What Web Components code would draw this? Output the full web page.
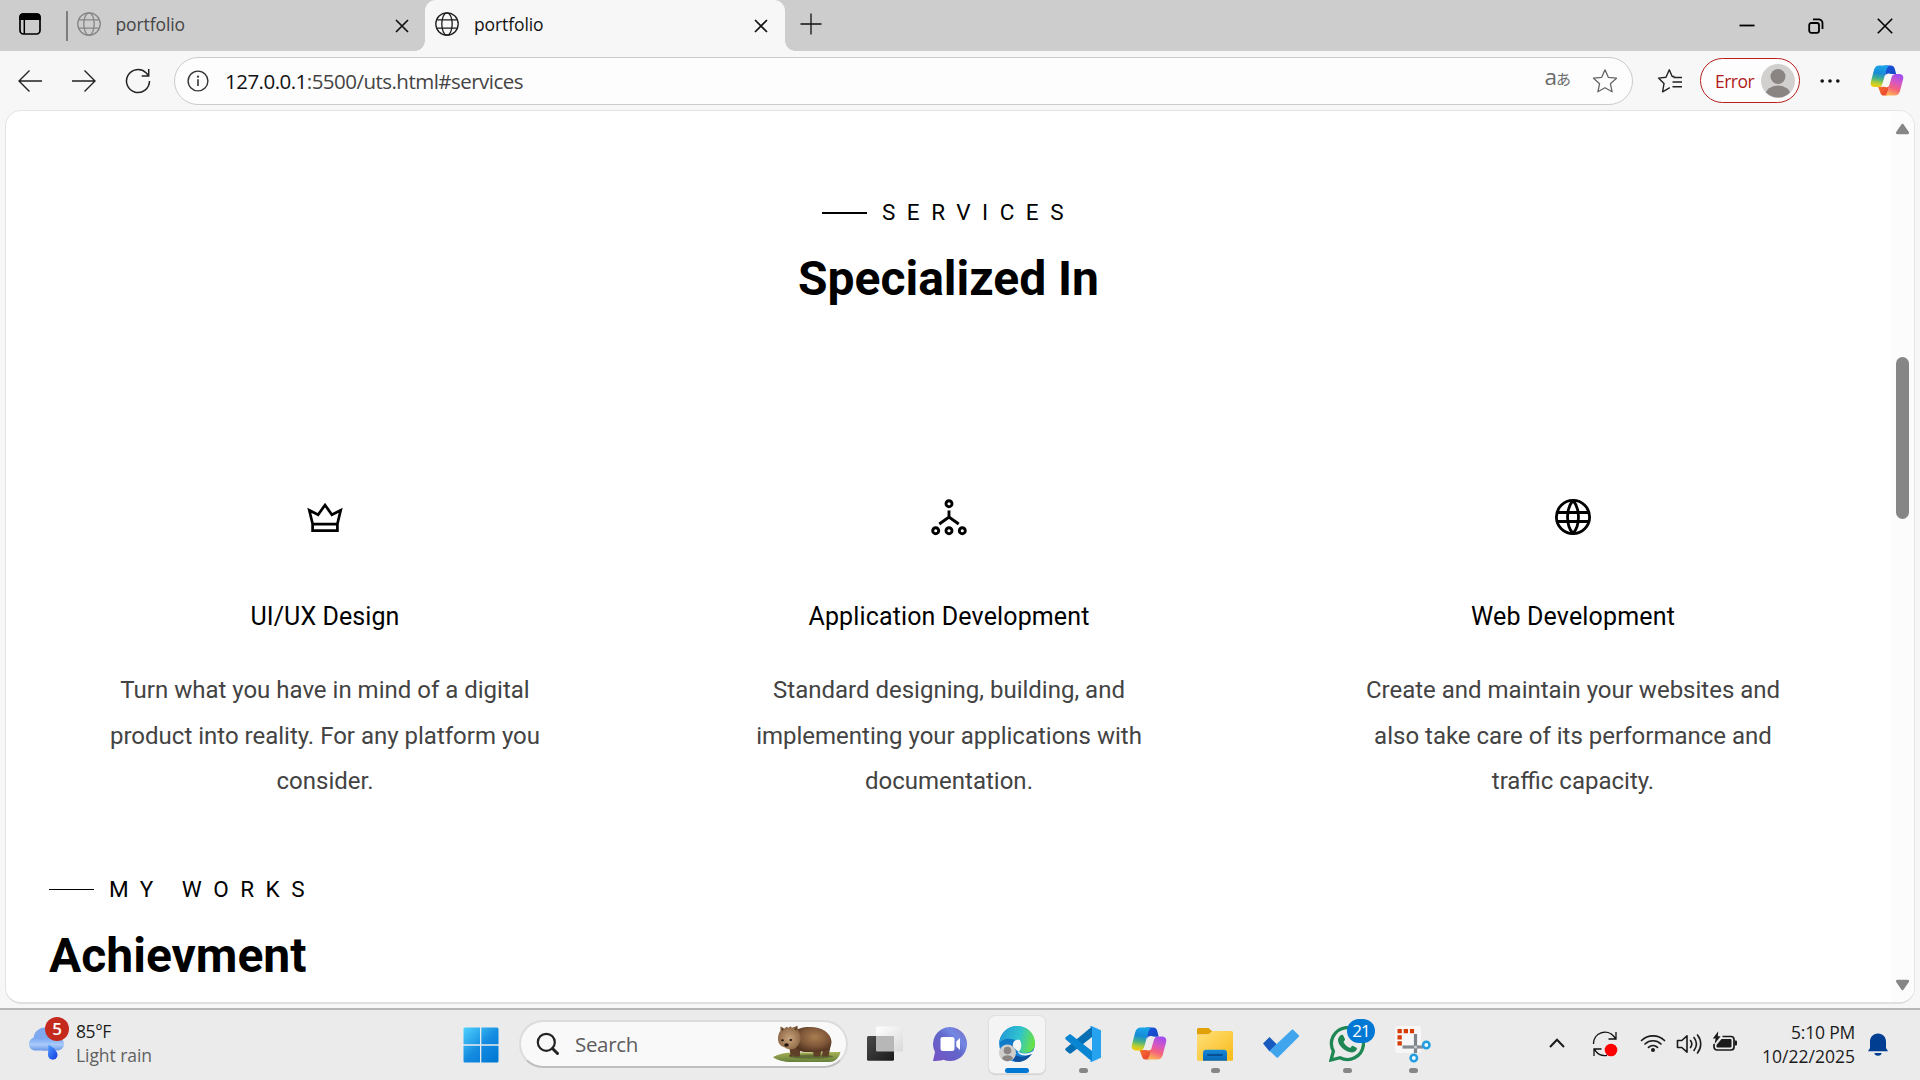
<!DOCTYPE html>
<html lang="en">
<head>
<meta charset="utf-8">
<title>portfolio</title>
<style>
html,body{margin:0;padding:0;overflow:hidden}
body{width:1920px;height:1080px;background:#f7f7f7;color:#000;font-family:"Open Sans","Noto Sans",sans-serif}
</style>
</head>
<body>
<desktop-screen></desktop-screen>
<script>
const ICONS = {
workspaces:['0 0 24 24',`<rect x="2" y="2.2" width="20" height="19.8" rx="3.5" fill="none" stroke="#000" stroke-width="1.7"/><path d="M1.2 8V5a3.8 3.8 0 0 1 3.8-3.8h14A3.8 3.8 0 0 1 22.800 5v3z"/><path d="M6.300 7v15" stroke="#000" stroke-width="1.500"/>`],
globe:['0 0 24 24',`<g fill="none" stroke="currentColor" stroke-width="1.3"><circle cx="12" cy="12" r="11.2"/><ellipse cx="12" cy="12" rx="5.200" ry="11.200"/><path d="M2 7.800h20M2 16.200h20"/></g>`],
cross:['0 0 14 14',`<path d="M1 1l12 12M13 1L1 13" fill="none" stroke="#111" stroke-width="1.700"/>`],
plus:['0 0 22 22',`<path d="M11 .5v21M.5 11h21" fill="none" stroke="#111" stroke-width="1.300"/>`],
min:['0 0 16 16',`<path d="M.5 7.500h15" stroke="#000" stroke-width="1.800"/>`],
restore:['0 0 16 16',`<g fill="none" stroke="#000" stroke-width="1.800"><rect x="1.200" y="5" width="9.800" height="9.800" rx="2"/><path d="M5 1.300h5.500a4 4 0 0 1 4 4V11"/></g>`],
close:['0 0 16 16',`<path d="M.8.800l14.400 14.400M15.200.800L.8 15.200" stroke="#000" stroke-width="1.600"/>`],
back:['0 0 24 24',`<path d="M24 12H1M11.500 1.500L1 12l10.500 10.500" fill="none" stroke="#222" stroke-width="1.400"/>`],
forward:['0 0 24 24',`<path d="M0 12h23M12.500 1.500L23 12 12.500 22.500" fill="none" stroke="#222" stroke-width="1.400"/>`],
reload:['0 0 26 26',`<path d="M24.500 13A11.500 11.500 0 1 1 21 4.800l2.700 3M23.700 1v7h-7" fill="none" stroke="#222" stroke-width="1.500"/>`],
info:['0 0 22 22',`<circle cx="11" cy="11" r="9.900" fill="none" stroke="#333" stroke-width="1.400"/><path d="M11 9.300V16" stroke="#333" stroke-width="1.600"/><circle cx="11" cy="6.700" r="1.100" fill="#333"/>`],
star:['0 0 26 26',`<path d="M13 1.800l3.300 7.500 8.200.9-6.100 5.500 1.700 8.100L13 19.700l-7.100 4.100 1.700-8.100-6.100-5.500 8.200-.9z" fill="none" stroke="#666" stroke-width="1.300" stroke-linejoin="round"/>`],
favorites:['0 0 26 26',`<g fill="none" stroke="#222" stroke-width="1.400" stroke-linejoin="round"><path d="M17.500 8.500h-2.300L12.300 1.800 9 9.300l-7.500.8 5.500 5.500-1.400 8.200 7.200-4.100"/><path d="M16.500 9.500H25M15.500 14H25M15.500 18.800H25"/></g>`],
avatar:['0 0 34 34',`<defs><clipPath id="a"><circle cx="17" cy="17" r="16.500"/></clipPath></defs><circle cx="17" cy="17" r="17" fill="#d2d0ce"/><g clip-path="url(#a)" fill="#8a8583"><circle cx="17" cy="12.500" r="7.500"/><ellipse cx="17" cy="31" rx="12.500" ry="9.500"/></g>`],
dots:['0 0 20 6',`<g fill="#111"><circle cx="2.200" cy="3" r="1.800"/><circle cx="10" cy="3" r="1.800"/><circle cx="17.800" cy="3" r="1.800"/></g>`],
copilot:['0 0 36 34',`<defs><linearGradient id="c1" x1=".45" y1="0" x2=".3" y2="1"><stop offset="0" stop-color="#1aa5e8"/><stop offset=".35" stop-color="#168bd8"/><stop offset=".6" stop-color="#45b08a"/><stop offset=".82" stop-color="#b8ce30"/><stop offset="1" stop-color="#f6cb10"/></linearGradient><linearGradient id="c2" x1=".7" y1="0" x2=".4" y2="1"><stop offset="0" stop-color="#9f4df2"/><stop offset=".38" stop-color="#d457c4"/><stop offset=".68" stop-color="#f5627c"/><stop offset="1" stop-color="#ffb057"/></linearGradient><linearGradient id="c3" x1="0" y1="0" x2="1" y2="1"><stop offset="0" stop-color="#1b53dd"/><stop offset="1" stop-color="#1448c0"/></linearGradient><linearGradient id="c4" x1="0" y1="0" x2="1" y2="1"><stop offset="0" stop-color="#f9752a"/><stop offset="1" stop-color="#e73b35"/></linearGradient></defs>
<path d="M15 1h7c2.500 0 3.800 1.500 4.400 4l1.300 5.200H24c-2.500 0-3.500-.6-4.500-.6-1.500 0-2.500.8-3 2.400z" fill="url(#c3)"/><path d="M8.500 23.500h4.500c3 0 3.500.6 5 .6 1.200 0 2-.7 2.500-2L18 33h-3.500c-2 0-3-1.200-3.500-3z" fill="url(#c4)"/>
<path d="M20.500 1C18.500 2 17.800 4 17 7l-3.700 13c-.8 2.800-2 4-4.300 4H5.500C1.500 24 0 21.500 1 18L4.300 5.500C5.200 2.500 6.800 1 10 1z" fill="url(#c1)"/><path d="M15.500 33c2-1 2.700-3 3.500-6l3.700-13c.8-2.800 2-4 4.300-4h3.500c4 0 5.500 2.500 4.500 6l-3.300 12.500c-.9 3-2.500 4.500-5.700 4.500z" fill="url(#c2)"/>`],
up:['0 0 16 12',`<path d="M8 2l5.500 8h-11z" fill="#868686" stroke="#868686" stroke-width="3" stroke-linejoin="round"/>`],
down:['0 0 16 12',`<path d="M8 10L2.500 2h11z" fill="#868686" stroke="#868686" stroke-width="3" stroke-linejoin="round"/>`],
crown:['0 0 40 40',`<path d="M4.300 13.200L7.700 27.200h24.600l3.400-14-8.800 4.500L20 8l-6.900 9.700zM7.600 27v6.600h24.800V27" fill="none" stroke="#000" stroke-width="2.700"/>`],
sitemap:['0 0 40 40',`<g fill="none" stroke="#000" stroke-width="2.900"><circle cx="20" cy="6.700" r="3"/><circle cx="6.700" cy="33.700" r="3"/><circle cx="20" cy="33.700" r="3"/><circle cx="33.300" cy="33.700" r="3"/><path d="M20 13.500v7M10.300 27L20 20l9.700 7"/></g>`],
world:['0 0 40 40',`<g fill="none" stroke="#000" stroke-width="2.800"><circle cx="20" cy="20" r="16.600"/><path d="M20 3.500c-7.300 8-7.300 25 0 33M20 3.500c7.300 8 7.300 25 0 33"/><path d="M4 15.500h32M4 24.500h32"/></g>`],
weather:['0 0 38 46',`<defs><linearGradient id="w1" x1="0" y1="0" x2="0" y2="1"><stop offset="0" stop-color="#6b9cf0"/><stop offset=".6" stop-color="#a9cbfa"/><stop offset="1" stop-color="#6c98e8"/></linearGradient><linearGradient id="w2" x1="0" y1="0" x2="1" y2="1"><stop offset="0" stop-color="#4fa0ff"/><stop offset="1" stop-color="#1238e0"/></linearGradient></defs><circle cx="17" cy="22" r="11.500" fill="#7fa9ef"/><path d="M7.500 20.500c3 0 5 1 6.500 3 2-3 5-4.500 8-4 3-1 6-1 9 1 3 1 5 3 5 6.500 0 4-3 6.500-7 6.500H8c-4.500 0-7-2.500-7-6.500s3-6.500 6.500-6.500z" fill="url(#w1)"/><path d="M20.500 27.500c5 3 9 7 9 10.500a4.700 4.700 0 0 1-9.500 0z" fill="url(#w2)"/>`],
start:['0 0 36 36',`<defs><linearGradient id="s" gradientUnits="userSpaceOnUse" x1="0" y1="0" x2="32" y2="36"><stop offset="0" stop-color="#4fd3ff"/><stop offset=".55" stop-color="#148be0"/><stop offset="1" stop-color="#0078d4"/></linearGradient></defs><path d="M2 .5h15v16.700H.5V2A1.500 1.500 0 0 1 2 .5zM18.300.5H34A1.500 1.500 0 0 1 35.500 2v15.200H18.300zM.5 18.700H17v16.800H2A1.500 1.500 0 0 1 .5 34zM18.300 18.700h17.200V34a1.500 1.500 0 0 1-1.500 1.500H18.300z" fill="url(#s)"/>`],
search:['0 0 24 24',`<g fill="none" stroke="#222"><circle cx="10.300" cy="10.300" r="8.500" stroke-width="2.200"/><path d="M16.500 16.500l5 5" stroke-width="3" stroke-linecap="round"/></g>`],
wombat:['0 0 70 40',`<defs><radialGradient id="b1" cx=".55" cy=".4" r=".6"><stop offset="0" stop-color="#a87e50"/><stop offset=".6" stop-color="#80583a"/><stop offset="1" stop-color="#553420"/></radialGradient><radialGradient id="b2" cx=".5" cy=".55" r=".6"><stop offset="0" stop-color="#c8a47e"/><stop offset=".7" stop-color="#9a7450"/><stop offset="1" stop-color="#7a5638"/></radialGradient><linearGradient id="b3" x1="0" y1="0" x2="0" y2="1"><stop offset="0" stop-color="#a9b056"/><stop offset="1" stop-color="#65803a"/></linearGradient></defs>
<path d="M1 32c7-4 15-5 25-4.500L68.500 27c-1 5-5 10-11 10H19C12 37 5 35.500 1 32z" fill="url(#b3)"/><ellipse cx="39" cy="31.500" rx="22" ry="2" fill="#45502a" opacity=".6"/><path d="M17 21l11 2v8.500h-6.500V29l-1 2.500h-3c-1-1 0-2 1-2zM41 22l9 1-2 8.500h-6.500zM51 21l8-2-2.500 12.500H50z" fill="#5f3f28"/><path d="M24 5c5-2.500 9-3 14-3 12 0 21 6 21.500 14.500 0 6-4 9-9.500 10-6 1-11 .5-15 .5-6 0-11-2-13-6z" fill="url(#b1)"/><path d="M8.500 1.500l4 2 2-1.800 2 1 2-1.500 1.500 1.500 5.500-2 .5 4.500c3 4 3.500 9 1 13.500-2 4-5 6-9 5.500-2.500 0-4-1-5.500-2-4-1-6.500-4-6.500-8.500 0-3.500 1-6 2.500-8z" fill="url(#b2)"/><path d="M9.500 2.800l2 2-1.500 1.200zM24.500 2l-2 2.500 2 1z" fill="#4f3321"/><ellipse cx="14.500" cy="20" rx="2.300" ry="1.700" fill="#241712"/><ellipse cx="10.500" cy="15.300" rx="1.400" ry="1" fill="#1e120d"/><ellipse cx="18.800" cy="15" rx="1.400" ry="1" fill="#1e120d"/>`],
taskview:['0 0 36 36',`<defs><linearGradient id="t" x1="0" y1="0" x2="1" y2="1"><stop offset="0" stop-color="#4a4a4a"/><stop offset="1" stop-color="#1a1a1a"/></linearGradient><linearGradient id="t2" x1="0" y1="0" x2="1" y2="1"><stop offset="0" stop-color="#fff"/><stop offset="1" stop-color="#d9d9d9"/></linearGradient></defs><rect x="9" y=".5" width="27" height="25" rx="1.500" fill="url(#t2)"/><rect x="0" y="10" width="27" height="24.700" rx="1.500" fill="url(#t)"/><path d="M9 10h18v15.500H10A1 1 0 0 1 9 24.500z" fill="#b7b7b7"/>`],
chat:['1 0 36 36',`<defs><linearGradient id="h" x1="1" y1="0" x2="0" y2="1"><stop offset="0" stop-color="#7d6ac4"/><stop offset=".3" stop-color="#7287e3"/><stop offset=".5" stop-color="#6167ca"/><stop offset="1" stop-color="#7651c4"/></linearGradient></defs><path d="M18 1a17 17 0 1 1-6.500 32.700C8 34.800 4 35 1 35L3 26A17 17 0 0 1 18 1z" fill="url(#h)"/><rect x="8.500" y="11" width="14" height="14" rx="2.200" fill="#fff"/><path d="M24.300 15.500L28 12v12l-3.700-3.500z" fill="#fff"/>`],
edge:['0 0 36 36',`<defs><linearGradient id="e1" x1="0" y1=".3" x2="1" y2=".5"><stop offset="0" stop-color="#2399d8"/><stop offset=".55" stop-color="#2fc3ce"/><stop offset="1" stop-color="#69e342"/></linearGradient><linearGradient id="e2" x1="0" y1="0" x2="0" y2="1"><stop offset="0" stop-color="#0c6db5"/><stop offset="1" stop-color="#168be0"/></linearGradient></defs><circle cx="18" cy="18" r="17.800" fill="url(#e2)"/><path d="M0 18C1 7 8.500 0 18 0c10 0 18 7 18 17 0 6-4 10-10 10-4 0-7-1-6-3 2-2 2-6-1-8C14 12 4 11 0 18z" fill="url(#e1)"/><path d="M13 18c-1 9 5 15 14 12 3-1 5-3 6.500-3C29 34 23 37 15.500 35.500 10 31 10 22 13 18z" fill="#0d519f"/><path d="M20.800 14c-2.500-.5-6 0-6.500 3.500-.3 4.500 5 10 11 10 5 0 8-1.500 11-4l-2 4c-1 .5-2 .5-3 1-5 2-10 1-12.500-2 3-2 5-7 2-12.500z" fill="#f4f4f4"/><circle cx="18" cy="19" r="4.200" fill="#f4f4f4"/><circle cx="8.500" cy="27" r="8.500" fill="#cfcdcb"/><circle cx="8.500" cy="24.500" r="3.800" fill="#8a8583"/><path d="M3 32.500c1-4.500 10-4.500 11 0-3 3.700-8 3.700-11 0z" fill="#8a8583"/>`],
vscode:['0 0 36 36',`<path d="M1 24.700L4 27.200c.8.600 1.500.6 2.200 0L27 11V.500L.8 22.300c-.8.800-.8 1.600.2 2.400z" fill="#066fb3"/><path d="M1 11l3-2.300c.8-.5 1.500-.4 2.200.1L27 25v10.500L.8 13.500C0 12.700 0 11.800 1 11z" fill="#0a85d2"/><path d="M26.500 0L36 4.300v27.400L26.500 36c-1 0-1.500-.3-2-1 1.500.8 2.500 0 2.500-2V3c0-2-1-2.800-2.500-2 .5-.7 1-1 2-1z" fill="#27a2ee"/>`],
folder:['0 0 36 36',`<defs><linearGradient id="f" x1="0" y1="0" x2="1" y2="1"><stop offset="0" stop-color="#ffe07a"/><stop offset="1" stop-color="#f9bb18"/></linearGradient><linearGradient id="f2" x1="0" y1="0" x2="0" y2="1"><stop offset="0" stop-color="#1689d8"/><stop offset="1" stop-color="#0668b8"/></linearGradient></defs><path d="M0 3.500A1.500 1.500 0 0 1 1.500 2h10l3.500 3v3.500H0z" fill="#dfa008"/><path d="M0 8.500h11l4.500-3.500H34.500A1.500 1.500 0 0 1 36 6.500V34a.8.800 0 0 1-.8.800H.8A.8.800 0 0 1 0 34z" fill="url(#f)"/><path d="M6 34.700V27a3.200 3.200 0 0 1 3.200-3.200h17.600A3.200 3.200 0 0 1 30 27v7.700z" fill="url(#f2)"/><path d="M11 29h14" stroke="#074f90" stroke-width="1.800" stroke-linecap="round"/>`],
todo:['0 0 36 36',`<path d="M0 17.500L6.500 11l7.500 7.500-7.500 7z" fill="#185abd"/><path d="M28.800 3.700c.4-.4 1-.4 1.400 0l5.600 5.600c.4.400.4 1 0 1.400L15 31.500c-.4.400-1 .4-1.400 0L6.500 24.800z" fill="#41a5ee"/>`],
whatsapp:['0 0 36 36',`<path d="M2 34l2.400-8.800A16 16 0 1 1 11 31.700z" fill="none" stroke="#1f8754" stroke-width="3.300"/><path d="M12 9c1-.5 1.800-.5 2.300.5l1.700 3.800c.3.700-1 2-1.500 2.700 1.500 3 3.700 5 6.800 6 .8-1 1.700-2.500 2.500-2.200l3.700 2c.6.300.5 1.200 0 2.200-1.400 2.300-4.500 3-7.200 2C14.500 24 10.800 20.500 9.300 16c-1-3 .5-5.500 2.700-7z" fill="#1f8754"/>`],
snip:['0 0 38 38',`<rect x="1" y="0" width="26" height="27" rx="3" fill="#f7f7f7"/><path d="M3.500 3h4.300v4.300H3.500zM9.700 3h4.300v4.300H9.700zM15.900 3h4.200v4.300h-4.200zM3.500 9.200h4.300v4.300H3.500zM3.500 15.300h4.300v4.200H3.500z" fill="#d83b01"/><path d="M21.500 8v19" stroke="#7d848b" stroke-width="3.200"/><path d="M8.500 21H29" stroke="#858c94" stroke-width="3.200"/><circle cx="21.500" cy="21" r="1.600" fill="#c8ccd0"/><g fill="#f5fbff" stroke="#209edf" stroke-width="2.500"><circle cx="32.300" cy="19" r="3.200"/><circle cx="19.800" cy="32" r="3.200"/></g>`],
chevron:['0 0 18 12',`<path d="M2 10l7-7.200 7 7.200" fill="none" stroke="#1b1b1b" stroke-width="2"/>`],
sync:['0 0 26 26',`<g fill="none" stroke="#111" stroke-width="1.300"><path d="M1.500 13A11.500 11.500 0 0 1 22 5.500l1.700 2.300M24 1v7h-7.500M15 24.300A11.500 11.500 0 0 1 4 20.500l-1.700-2.300M2 25v-7h7.500"/></g><circle cx="19" cy="19" r="6.300" fill="#f00"/>`],
wifi:['0 0 26 20',`<g fill="none" stroke="#1b1b1b" stroke-width="1.700" stroke-linecap="round"><path d="M1.500 7.500a16.500 16.500 0 0 1 23 0M5 11a11.500 11.500 0 0 1 16 0M8.500 14.300a6.500 6.500 0 0 1 9 0"/></g><circle cx="13" cy="17" r="2" fill="#1b1b1b"/>`],
speaker:['0 0 26 22',`<g fill="none" stroke="#1b1b1b" stroke-width="1.600" stroke-linecap="round" stroke-linejoin="round"><path d="M1.500 7.500h4.300L11 2.800v16.400l-5.200-4.700H1.500z"/><path d="M14.500 7.500c1.500 2 1.500 5 0 7M18 4.500c3 4 3 9 0 13M21.500 2c4.300 5.500 4.300 12.500 0 18"/></g>`],
battery:['0 0 26 22',`<path d="M10.500 5.500H19a3 3 0 0 1 3 3V16a3 3 0 0 1-3 3H5a3 3 0 0 1-3-3v-3" fill="none" stroke="#1b1b1b" stroke-width="1.700"/><path d="M9.500 8H18.500a1 1 0 0 1 1 1v6.500a1 1 0 0 1-1 1h-13a1 1 0 0 1-1-1V14z" fill="#1b1b1b"/><path d="M22.500 9.500h1.500a1 1 0 0 1 1 1v3a1 1 0 0 1-1 1h-1.500z" fill="#1b1b1b"/><path d="M6.300.3L.8 7.500h2.800l-1 5.500L8.600 5.300H5.800z" fill="#1b1b1b"/>`],
bell:['0 0 22 26',`<path d="M11 1.500c5 0 8 3.700 8 8V16l2 3.300H1L3 16V9.500c0-4.300 3-8 8-8zM7.500 21h7a3.500 2.800 0 0 1-7 0z" fill="#003e92"/>`]
};
const define = (name, html, setup) => {
  const t = document.createElement('template');
  t.innerHTML = html;
  customElements.define(name, class extends HTMLElement {
    connectedCallback() {
      if (this.shadowRoot) return;
      this.attachShadow({mode: 'open'}).append(t.content.cloneNode(true));
      if (setup) setup(this, this.shadowRoot);
    }
  });
};

/* ui-icon: name, w, h */
define('ui-icon', `<style>:host{display:block;flex:none;line-height:0}svg{display:block}</style>`, (el, root) => {
  const [vb, body] = ICONS[el.getAttribute('name')];
  const [, , vw, vh] = vb.split(' ');
  const w = el.getAttribute('w') || vw, h = el.getAttribute('h') || vh;
  const box = document.createElement('div');
  box.innerHTML = `<svg width="${w}" height="${h}" viewBox="${vb}">${body}</svg>`;
  root.append(box.firstChild);
});

/* text-run: one line of text, tracked to the measure given in "w" */
define('text-run', `<style>:host{display:block;flex:none;white-space:nowrap;width:max-content}</style><slot></slot>`, el => {
  const target = parseFloat(el.getAttribute('w'));
  if (!target) return;
  const n = [...el.textContent].length;
  const natural = el.getBoundingClientRect().width;
  el.style.letterSpacing = ((target - natural) / n).toFixed(3) + 'px';
});

define('browser-tab', `<style>
:host{display:flex;flex:none;align-items:center;box-sizing:border-box;height:51px;font-size:17.500px;line-height:24px;color:#454545;position:relative}
ui-icon.g{color:#858585}
:host([active]){background:#f7f7f7;border-radius:11px 11px 0 0;color:#111}
:host([active]) .g{color:#1d1d1d}
:host([active])::before,:host([active])::after{content:"";position:absolute;bottom:0;width:10px;height:10px}
:host([active])::before{left:-10px;background:radial-gradient(circle at 0 0,transparent 9.500px,#f7f7f7 10px)}
:host([active])::after{right:-10px;background:radial-gradient(circle at 100% 0,transparent 9.500px,#f7f7f7 10px)}
.t{margin:-4px 0 0 15px}.x{margin-left:auto;margin-right:16px}.g{margin-left:9px;margin-top:-3px}
:host([active]) .g{margin-left:10px}:host([active]) .x{margin-right:17px}
</style><ui-icon class="g" name="globe"></ui-icon><text-run class="t" w="69.5">portfolio</text-run><ui-icon class="x" name="cross"></ui-icon>`);

define('tab-strip', `<style>
:host{display:flex;height:51px;flex:none;background:#cdcdcd;align-items:center}
.div{width:1.500px;height:30px;background:#7e7e7e;margin-left:24px;margin-top:1px}
.win{display:flex;margin-left:auto;gap:53px;margin-right:27px;align-items:center}
</style>
<ui-icon name="workspaces" style="margin-left:18px;margin-top:-3px"></ui-icon><div class="div"></div>
<browser-tab style="width:357.500px;margin-left:0"></browser-tab>
<browser-tab active style="width:360px"></browser-tab>
<ui-icon name="plus" style="margin-left:15px;margin-top:-4px"></ui-icon>
<div class="win"><ui-icon name="min"></ui-icon><ui-icon name="restore"></ui-icon><ui-icon name="close"></ui-icon></div>`);

define('address-bar', `<style>
:host{display:flex;flex:none;box-sizing:border-box;width:1459px;height:48px;border:1.500px solid #cbcbcb;border-radius:24px;background:#fdfdfd;align-items:center;padding-left:12px;font-size:20.500px;line-height:28px}
span{color:#111}.u{color:#444;margin-left:16px;margin-top:1px}
.tr{margin-left:auto;margin-top:-5px;color:#6b6b6b;font:22.500px/28px "Open Sans","Noto Sans CJK JP",sans-serif;letter-spacing:-1px;display:flex;align-items:baseline}
.tr span{font:15px/28px "Noto Sans CJK JP",sans-serif;color:#6b6b6b;letter-spacing:0}
</style><ui-icon name="info"></ui-icon><text-run class="u" w="298"><span>127.0.0.1</span>:5500/uts.html#services</text-run>
<div class="tr">a<span>あ</span></div><ui-icon name="star" style="margin-left:21px;margin-right:14px"></ui-icon>`);

define('tool-bar', `<style>
:host{display:flex;flex:none;height:59px;align-items:center;background:#f7f7f7}
.err{display:flex;align-items:center;justify-content:space-between;box-sizing:border-box;width:100px;height:45px;border:1.500px solid #b91e1e;border-radius:23px;color:#b11a1a;padding:0 4px 0 14px;font-size:17.500px;background:#fdfdfd;margin-left:17px}
</style>
<ui-icon name="back" style="margin-left:18px"></ui-icon><ui-icon name="forward" style="margin-left:30px"></ui-icon><ui-icon name="reload" style="margin-left:29px"></ui-icon>
<address-bar style="margin-left:23px"></address-bar>
<ui-icon name="favorites" style="margin-left:24px"></ui-icon>
<div class="err"><text-run w="39">Error</text-run><ui-icon name="avatar"></ui-icon></div>
<ui-icon name="dots" style="margin-left:20px"></ui-icon><ui-icon name="copilot" w="34" h="33" style="margin-left:30px"></ui-icon>`);

define('section-heading', `<style>
:host{display:flex;flex-direction:column;font-family:Roboto,sans-serif;color:#000}
.k{display:flex;align-items:center;height:30px;font-size:22.500px;line-height:30px}
.k i{width:45px;height:var(--rule,2px);background:#000;margin:1px 15px 0 0}
.h{font-weight:700;font-size:48px;line-height:60px;margin-top:22px}
</style><div class="k"><i></i><slot name="kicker"></slot></div><div class="h"><slot></slot></div>`);

define('service-card', `<style>
:host{display:flex;flex-direction:column;align-items:center;font-family:Roboto,sans-serif;width:624px;flex:none}
.t{font-size:25px;line-height:32px;margin-top:64px;color:#000}
.b{display:flex;flex-direction:column;align-items:center;margin-top:35px;font-size:24px;line-height:45.500px;color:#434343}
</style><slot name="icon"></slot><div class="t"><slot name="title"></slot></div><div class="b"><slot></slot></div>`);

define('page-scrollbar', `<style>
:host{display:flex;flex-direction:column;align-items:center;width:23px;flex:none;background:#fcfcfc;box-sizing:border-box;padding:12px 0 11px}
div{width:13px;height:162px;border-radius:6.500px;background:#868686;margin:222px 0 auto}
</style><ui-icon name="up" w="15"></ui-icon><div></div><ui-icon name="down" w="15"></ui-icon>`);

define('page-view', `<style>
:host{display:flex;flex:none;box-sizing:border-box;margin:0 5px;width:1910px;height:894px;border:1px solid #e4e4e4;border-bottom:2px solid #e0e0e0;border-radius:16px;background:#fff;overflow:hidden}
main{display:flex;flex-direction:column;width:1885px;box-sizing:border-box;padding-top:86px}
.c{align-self:center;align-items:center}
.row{display:flex;width:1872px;margin:188px 0 0 7px}
</style><main>
<section-heading class="c"><text-run slot="kicker" w="193">SERVICES</text-run><text-run w="301">Specialized In</text-run></section-heading>
<div class="row">
<service-card><ui-icon slot="icon" name="crown"></ui-icon><text-run slot="title" w="149">UI/UX Design</text-run><text-run>Turn what you have in mind of a digital</text-run><text-run>product into reality. For any platform you</text-run><text-run>consider.</text-run></service-card>
<service-card><ui-icon slot="icon" name="sitemap"></ui-icon><text-run slot="title" w="281">Application Development</text-run><text-run>Standard designing, building, and</text-run><text-run>implementing your applications with</text-run><text-run>documentation.</text-run></service-card>
<service-card><ui-icon slot="icon" name="world"></ui-icon><text-run slot="title" w="204">Web Development</text-run><text-run>Create and maintain your websites and</text-run><text-run>also take care of its performance and</text-run><text-run>traffic capacity.</text-run></service-card>
</div>
<section-heading style="margin:69px 0 0 43px;--rule:1px"><text-run slot="kicker" w="207">MY WORKS</text-run><text-run w="257.5">Achievment</text-run></section-heading>
</main><page-scrollbar></page-scrollbar>`);

define('task-item', `<style>
:host{display:flex;flex:none;justify-content:center;width:66px;height:58px;position:relative}
.p{display:flex;justify-content:center;width:56px;height:57px;box-sizing:border-box;padding-top:10px;border-radius:6px}
:host([active]) .p{background:#f4f4f4;box-shadow:0 0 0 1px #e0e0e0,0 1px 1px 1px #d2d2d2}
:host([open])::after,:host([active])::after{content:"";position:absolute;bottom:1px;width:9px;height:5px;border-radius:2.500px;background:#868686}
:host([active])::after{width:24px;background:#0078d4}
.b{position:absolute;left:33px;top:3px;width:28px;height:24px;border-radius:12px;background:#0078d4;color:#fff;text-align:center;font:17px/24px "Open Sans",sans-serif;letter-spacing:-1px}
</style><div class="p"><slot></slot></div>`, (el, root) => {
  if (!el.hasAttribute('badge')) return;
  const b = document.createElement('div');
  b.className = 'b'; b.textContent = el.getAttribute('badge'); root.append(b);
});

define('search-box', `<style>
:host{display:flex;flex:none;box-sizing:border-box;width:329px;height:48px;border:2px solid #dcdcdc;border-bottom-color:#bfbfbf;border-radius:24px;background:#f9f9f9;align-items:center;font-size:20.500px;line-height:28px;color:#5c5c5c;padding:0 4px 0 15px}
</style><ui-icon name="search"></ui-icon><text-run w="63" style="margin-left:15px">Search</text-run><ui-icon name="wombat" style="margin-left:auto;margin-top:1px"></ui-icon>`);

define('weather-widget', `<style>
:host{display:flex;flex:none;position:relative;height:70px}
ui-icon{margin:7px 0 0 0}
.b{position:absolute;left:17px;top:7px;width:24px;height:24px;border-radius:50%;background:#c42b1c;color:#fff;font:600 17px/24px "Open Sans",sans-serif;text-align:center}
.t{margin:9px 0 0 10px;font-size:17.500px;line-height:24px;color:#1b1b1b}.s{color:#606060}
</style><ui-icon name="weather"></ui-icon><div class="b">5</div><div class="t"><text-run w="35">85°F</text-run><text-run class="s" w="76">Light rain</text-run></div>`);

define('task-bar', `<style>
:host{display:flex;flex:none;box-sizing:border-box;height:72px;border-top:2px solid #b7b7b7;background:#ebebeb;align-items:flex-start}
.apps{display:flex;margin:6px 0 0 4px}
.tray{display:flex;align-items:center;height:66px;margin-left:auto;padding-right:31px}
.clock{display:flex;flex-direction:column;align-items:flex-end;width:100px;font-size:17.500px;line-height:24px;color:#1b1b1b;margin-left:17px;margin-top:1px}
</style>
<weather-widget style="margin-left:28px;width:150px"></weather-widget>
<ui-icon name="start" style="margin:17px 0 0 285px"></ui-icon>
<search-box style="margin:10px 0 0 20px"></search-box>
<div class="apps">
<task-item><ui-icon name="taskview"></ui-icon></task-item>
<task-item><ui-icon name="chat"></ui-icon></task-item>
<task-item active><ui-icon name="edge"></ui-icon></task-item>
<task-item open><ui-icon name="vscode"></ui-icon></task-item>
<task-item><ui-icon name="copilot" w="36" h="35"></ui-icon></task-item>
<task-item open><ui-icon name="folder"></ui-icon></task-item>
<task-item><ui-icon name="todo"></ui-icon></task-item>
<task-item open badge="21"><ui-icon name="whatsapp"></ui-icon></task-item>
<task-item open><ui-icon name="snip"></ui-icon></task-item>
</div>
<div class="tray"><ui-icon name="chevron"></ui-icon><ui-icon name="sync" style="margin-left:26px;margin-top:2px"></ui-icon><ui-icon name="wifi" style="margin-left:22px"></ui-icon><ui-icon name="speaker" style="margin-left:10px;margin-top:2px"></ui-icon><ui-icon name="battery" style="margin-left:10px;margin-top:-2px"></ui-icon>
<div class="clock"><text-run w="64">5:10 PM</text-run><text-run w="93">10/22/2025</text-run></div><ui-icon name="bell" style="margin-left:12px;margin-top:3px"></ui-icon></div>`);

define('desktop-screen', `<style>:host{display:flex;flex-direction:column;width:1920px;height:1080px;background:#f7f7f7;overflow:hidden}task-bar{margin-top:auto}</style>
<tab-strip></tab-strip><tool-bar></tool-bar><page-view></page-view><task-bar></task-bar>`);
</script>
</body>
</html>
